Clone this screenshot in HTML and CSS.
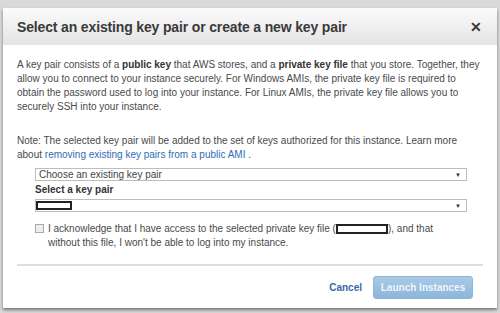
FILE: index.html
```html
<!DOCTYPE html>
<html lang="en">
<head>
    <meta charset="UTF-8">
    <meta name="viewport" content="width=device-width, initial-scale=1.0">
    <title>Select key pair</title>
    <link rel="stylesheet" href="styles.css">
</head>
<body>
    <div class="dialog">
        <div class="dialog-header">
            <h1>Select an existing key pair or create a new key pair</h1>
            <span class="close">&#x2715;</span>
        </div>

        <div class="dialog-body">
            <p>A key pair consists of a <b>public key</b> that AWS stores, and a <b>private key file</b> that you store. Together, they allow you to connect to your instance securely. For Windows AMIs, the private key file is required to obtain the password used to log into your instance. For Linux AMIs, the private key file allows you to securely SSH into your instance.</p>

            <p class="note">Note: The selected key pair will be added to the set of keys authorized for this instance. Learn more about <a href="#">removing existing key pairs from a public AMI</a> .</p>

            <div class="form">
                <div class="select">
                    <span>Choose an existing key pair</span>
                    <span class="arrow">&#9660;</span>
                </div>
                <div class="label">Select a key pair</div>
                <div class="select">
                    <span class="redact small"></span>
                    <span class="arrow">&#9660;</span>
                </div>
                <div class="ack">
                    <span class="checkbox"></span>
                    <span>I acknowledge that I have access to the selected private key file (<span class="redact wide"></span>), and that without this file, I won't be able to log into my instance.</span>
                </div>
            </div>
        </div>

        <div class="dialog-footer">
            <a href="#" class="cancel">Cancel</a>
            <button class="launch">Launch Instances</button>
        </div>
    </div>
</body>
</html>
```

FILE: styles.css
```css
* {
    margin: 0;
    padding: 0;
    box-sizing: border-box;
}
body {
    font-family: 'Liberation Sans', Arial, sans-serif;
    background: #d9d9d9;
    width: 500px;
    height: 313px;
    overflow: hidden;
    padding: 8px 3px 0 3px;
}
.dialog {
    background: #fff;
    height: 300px;
    display: flex;
    flex-direction: column;
    box-shadow: 0 2px 3px rgba(0, 0, 0, 0.45);
}
.dialog-header {
    height: 37px;
    display: flex;
    align-items: center;
    justify-content: space-between;
    padding: 0 15px 0 14px;
    background: linear-gradient(#fbfbfb, #e4e4e4);
}
.dialog-header h1 {
    font-size: 14px;
    font-weight: bold;
    letter-spacing: -0.15px;
    color: #3a3a3a;
}
.close {
    font-size: 14px;
    font-weight: bold;
    color: #3a3a3a;
}
.dialog-body {
    padding: 13px 14px 0 14px;
    font-size: 10px;
    line-height: 14px;
    color: #4a4a4a;
    flex: 1;
}
.dialog-body b {
    color: #333;
}
.note {
    margin-top: 20px;
}
.note a {
    color: #2f6db5;
    text-decoration: none;
}
.form {
    margin: 6px 16px 0 18px;
}
.select {
    height: 13px;
    border: 1px solid #bdbdbd;
    display: flex;
    align-items: center;
    justify-content: space-between;
    padding: 0 5px 0 3px;
    font-size: 10px;
    color: #444;
}
.arrow {
    font-size: 6px;
    color: #333;
}
.label {
    font-weight: bold;
    color: #333;
    margin: 2px 0 2px 0;
}
.redact {
    display: inline-block;
    border: 2px solid #222;
    background: #fff;
    vertical-align: middle;
}
.redact.small {
    width: 36px;
    height: 9px;
    margin-left: -3px;
}
.redact.wide {
    width: 52px;
    height: 10px;
}
.ack {
    display: flex;
    gap: 4px;
    margin-top: 10px;
}
.checkbox {
    flex: none;
    width: 9px;
    height: 9px;
    border: 1px solid #aaa;
    background: #eee;
    margin-top: 2px;
}
.dialog-footer {
    margin: 0 14px;
    border-top: 2px solid #dedede;
    height: 44px;
    display: flex;
    align-items: center;
    justify-content: flex-end;
    gap: 11px;
    padding-right: 10px;
}
.cancel {
    font-size: 10px;
    font-weight: bold;
    color: #3a67a4;
    text-decoration: none;
}
.launch {
    width: 100px;
    height: 23px;
    border: 1px solid #8db5d6;
    border-radius: 3px;
    background: linear-gradient(#a9cae6, #8cb6da);
    color: #eef5fb;
    font-family: 'Liberation Sans', Arial, sans-serif;
    font-size: 10px;
    font-weight: bold;
}
```
